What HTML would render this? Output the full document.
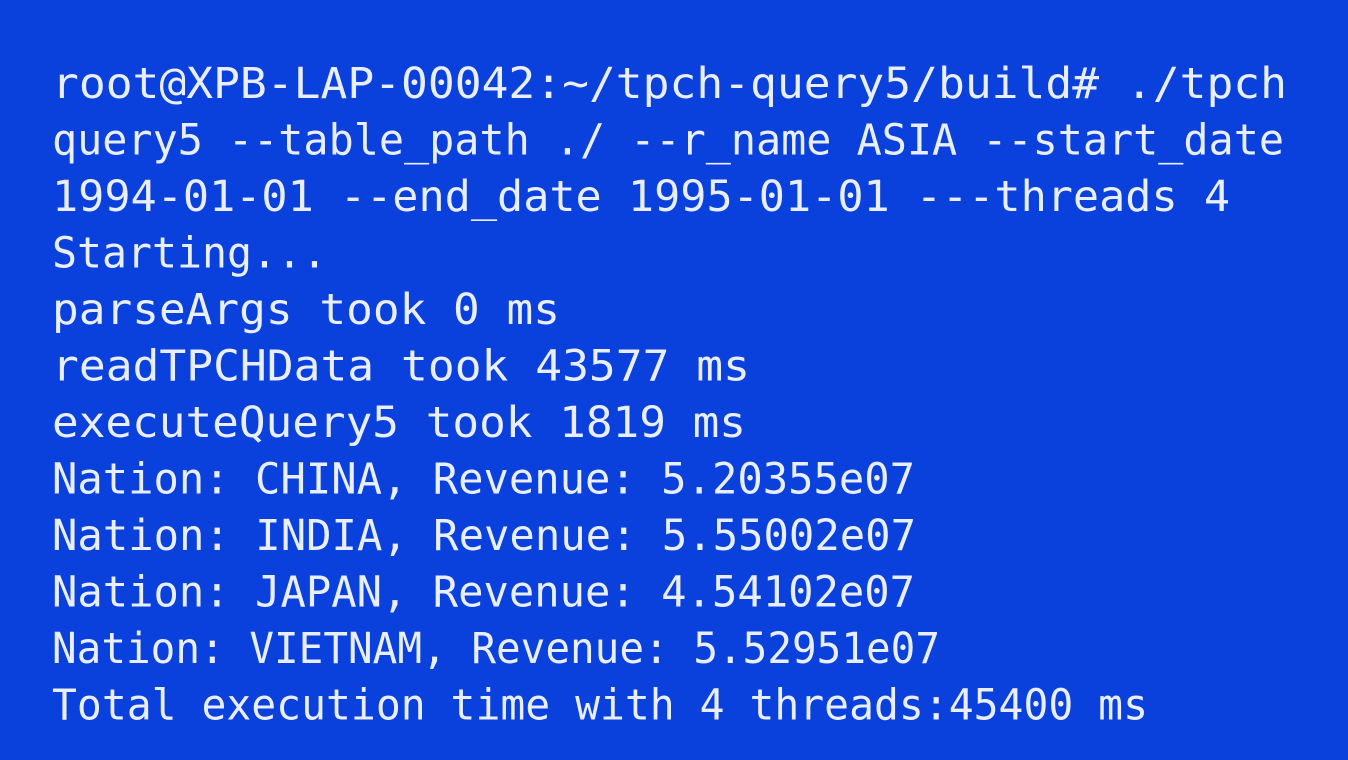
<!DOCTYPE html>
<html><head><meta charset="utf-8"><style>
html,body{margin:0;padding:0;background:#0a40dc;width:1348px;height:760px;overflow:hidden}
svg{display:block}
text{font-family:"DejaVu Sans Mono","Liberation Mono",monospace;font-size:43px;fill:#e8eefc}
</style></head><body>
<svg width="1348" height="760" xmlns="http://www.w3.org/2000/svg">
<rect width="1348" height="760" fill="#0a40dc"/>
<text x="52" y="98" textLength="1235" lengthAdjust="spacingAndGlyphs">root@XPB-LAP-00042:~/tpch-query5/build# ./tpch</text>
<text x="52" y="154.5" textLength="1232" lengthAdjust="spacingAndGlyphs">query5 --table_path ./ --r_name ASIA --start_date</text>
<text x="52" y="211" textLength="1178" lengthAdjust="spacingAndGlyphs">1994-01-01 --end_date 1995-01-01 ---threads 4</text>
<text x="52" y="267.5" textLength="275" lengthAdjust="spacingAndGlyphs">Starting...</text>
<text x="52" y="324" textLength="508" lengthAdjust="spacingAndGlyphs">parseArgs took 0 ms</text>
<text x="52" y="380.5" textLength="698" lengthAdjust="spacingAndGlyphs">readTPCHData took 43577 ms</text>
<text x="52" y="437" textLength="694" lengthAdjust="spacingAndGlyphs">executeQuery5 took 1819 ms</text>
<text x="52" y="493.5" textLength="863" lengthAdjust="spacingAndGlyphs">Nation: CHINA, Revenue: 5.20355e07</text>
<text x="52" y="550" textLength="864" lengthAdjust="spacingAndGlyphs">Nation: INDIA, Revenue: 5.55002e07</text>
<text x="52" y="606.5" textLength="863" lengthAdjust="spacingAndGlyphs">Nation: JAPAN, Revenue: 4.54102e07</text>
<text x="52" y="663" textLength="888" lengthAdjust="spacingAndGlyphs">Nation: VIETNAM, Revenue: 5.52951e07</text>
<text x="52" y="719.5" textLength="1096" lengthAdjust="spacingAndGlyphs">Total execution time with 4 threads:45400 ms</text>
</svg>
</body></html>
